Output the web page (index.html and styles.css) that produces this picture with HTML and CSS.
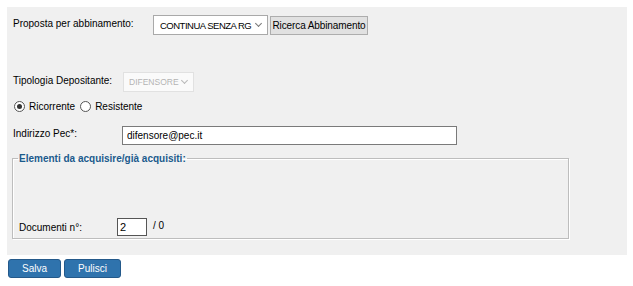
FILE: index.html
```html
<!DOCTYPE html>
<html lang="it">
<head>
    <meta charset="UTF-8">
    <title>Deposito</title>
    <link rel="stylesheet" href="styles.css">
</head>
<body>
<div class="panel">
    <div class="row row-proposta">
        <label class="lbl lbl-proposta">Proposta per abbinamento:</label>
        <span class="sel-wrap sel-proposta">
            <select class="sel">
                <option>CONTINUA SENZA RG</option>
            </select>
        </span>
        <input type="button" class="btn-grey" value="Ricerca Abbinamento">
    </div>

    <div class="row row-tipologia">
        <label class="lbl lbl-tipologia">Tipologia Depositante:</label>
        <span class="sel-wrap sel-tipologia disabled">
            <select class="sel" disabled>
                <option>DIFENSORE</option>
            </select>
        </span>
    </div>

    <div class="row row-radio">
        <label class="radio"><input type="radio" name="parte" checked>Ricorrente</label>
        <label class="radio"><input type="radio" name="parte">Resistente</label>
    </div>

    <div class="row row-pec">
        <label class="lbl lbl-pec">Indirizzo Pec*:</label>
        <input type="text" class="txt txt-pec" value="difensore@pec.it">
    </div>

    <fieldset class="elementi">
        <legend>Elementi da acquisire/già acquisiti:</legend>
        <div class="row row-doc">
            <label class="lbl lbl-doc">Documenti n°:</label>
            <input type="text" class="txt txt-doc" value="2">
            <span class="tot">/ 0</span>
        </div>
    </fieldset>
</div>

<div class="actions">
    <input type="button" class="btn-blue btn-salva" value="Salva">
    <input type="button" class="btn-blue btn-pulisci" value="Pulisci">
</div>
</body>
</html>
```

FILE: styles.css
```css
html, body {
    margin: 0;
    padding: 0;
}
body {
    padding: 7px 6px 0 7px;
    font-family: "Liberation Sans", Arial, sans-serif;
    font-size: 10px;
    color: #000;
    background: #fff;
}
.panel {
    background: #f0f0f0;
    height: 248px;
    box-sizing: border-box;
    padding: 8px 0 0 6px;
}
.row {
    display: flex;
    align-items: center;
}
.lbl {
    display: inline-block;
}

/* riga proposta */
.row-proposta {
    height: 20px;
    align-items: flex-start;
}
.lbl-proposta {
    width: 140px;
    padding-top: 3px;
}
.sel-wrap {
    position: relative;
    display: inline-block;
    height: 20px;
}
.sel-wrap::after {
    content: "";
    position: absolute;
    right: 7px;
    top: 6px;
    width: 4px;
    height: 4px;
    border-right: 1px solid #777;
    border-bottom: 1px solid #777;
    transform: rotate(45deg);
    pointer-events: none;
}
.sel-wrap.disabled::after {
    border-color: #b8b8b8;
}
.sel {
    -webkit-appearance: none;
    appearance: none;
    font-family: "Liberation Sans", Arial, sans-serif;
    font-size: 9.5px;
    letter-spacing: -0.5px;
    width: 100%;
    height: 20px;
    box-sizing: border-box;
    border: 1px solid #a9a9a9;
    border-radius: 0;
    background: #fff;
    color: #000;
    padding: 0 8px 0 6px;
    margin: 0;
}
.sel-proposta {
    width: 115px;
}
.btn-grey {
    font-family: "Liberation Sans", Arial, sans-serif;
    font-size: 10px;
    height: 19px;
    width: 98px;
    margin: 1px 0 0 2px;
    padding: 0;
    background: #e1e1e1;
    border: 1px solid #adadad;
    border-radius: 0;
    color: #000;
    letter-spacing: -0.1px;
}

/* riga tipologia */
.row-tipologia {
    margin-top: 37px;
    height: 20px;
}
.lbl-tipologia {
    width: 110px;
    margin-top: -3px;
}
.sel-tipologia {
    width: 71px;
}
.sel-tipologia .sel {
    font-size: 8.5px;
    letter-spacing: 0;
    color: #9a9a9a;
    border-color: #dcdcdc;
    background: #fff;
    padding: 0 12px 0 5px;
}

/* radio */
.row-radio {
    margin-top: 4px;
    height: 20px;
}
.radio {
    display: inline-flex;
    align-items: center;
    margin-right: 4px;
}
.radio input {
    -webkit-appearance: none;
    appearance: none;
    box-sizing: border-box;
    margin: 0 4px 0 1px;
    width: 11px;
    height: 11px;
    border: 1px solid #555;
    border-radius: 50%;
    background: #fff;
    position: relative;
}
.radio input:checked::after {
    content: "";
    position: absolute;
    left: 2px;
    top: 2px;
    width: 5px;
    height: 5px;
    border-radius: 50%;
    background: #333;
}

/* pec */
.row-pec {
    margin-top: 10px;
    height: 19px;
}
.lbl-pec {
    width: 109px;
    margin-top: -4px;
}
.txt {
    font-family: "Liberation Sans", Arial, sans-serif;
    font-size: 10px;
    height: 19px;
    box-sizing: border-box;
    border: 1px solid #7a7a7a;
    border-radius: 0;
    background: #fff;
    padding: 1px 4px;
    margin: 0;
}
.txt-pec {
    width: 335px;
}

/* fieldset */
.elementi {
    margin: 8px 0 0 -1px;
    width: 557px;
    height: 86px;
    box-sizing: border-box;
    border: 1px solid #bdbdbd;
    box-shadow: inset 1px 1px 0 #fff, 1px 1px 0 #fff;
    padding: 0 0 0 6px;
}
.elementi legend {
    color: #1b5a8c;
    font-weight: bold;
    font-size: 10px;
    padding: 0 1px 0 1px;
    margin-left: -1px;
}
.row-doc {
    margin-top: 54px;
    height: 18px;
}
.lbl-doc {
    width: 98px;
}
.txt-doc {
    width: 30px;
    height: 18px;
    padding: 1px 2px;
    border-color: #555;
    font-size: 11px;
}
.tot {
    margin-left: 6px;
    margin-top: -4px;
}

/* azioni */
.actions {
    display: flex;
    gap: 3px;
    margin-top: 4px;
    padding-left: 1px;
}
.btn-blue {
    font-family: "Liberation Sans", Arial, sans-serif;
    font-size: 10px;
    height: 19px;
    color: #fff;
    background: #2f73ad;
    border: 1px solid #24598a;
    border-radius: 3px;
    padding: 0;
}
.btn-salva {
    width: 53px;
}
.btn-pulisci {
    width: 57px;
}
```
